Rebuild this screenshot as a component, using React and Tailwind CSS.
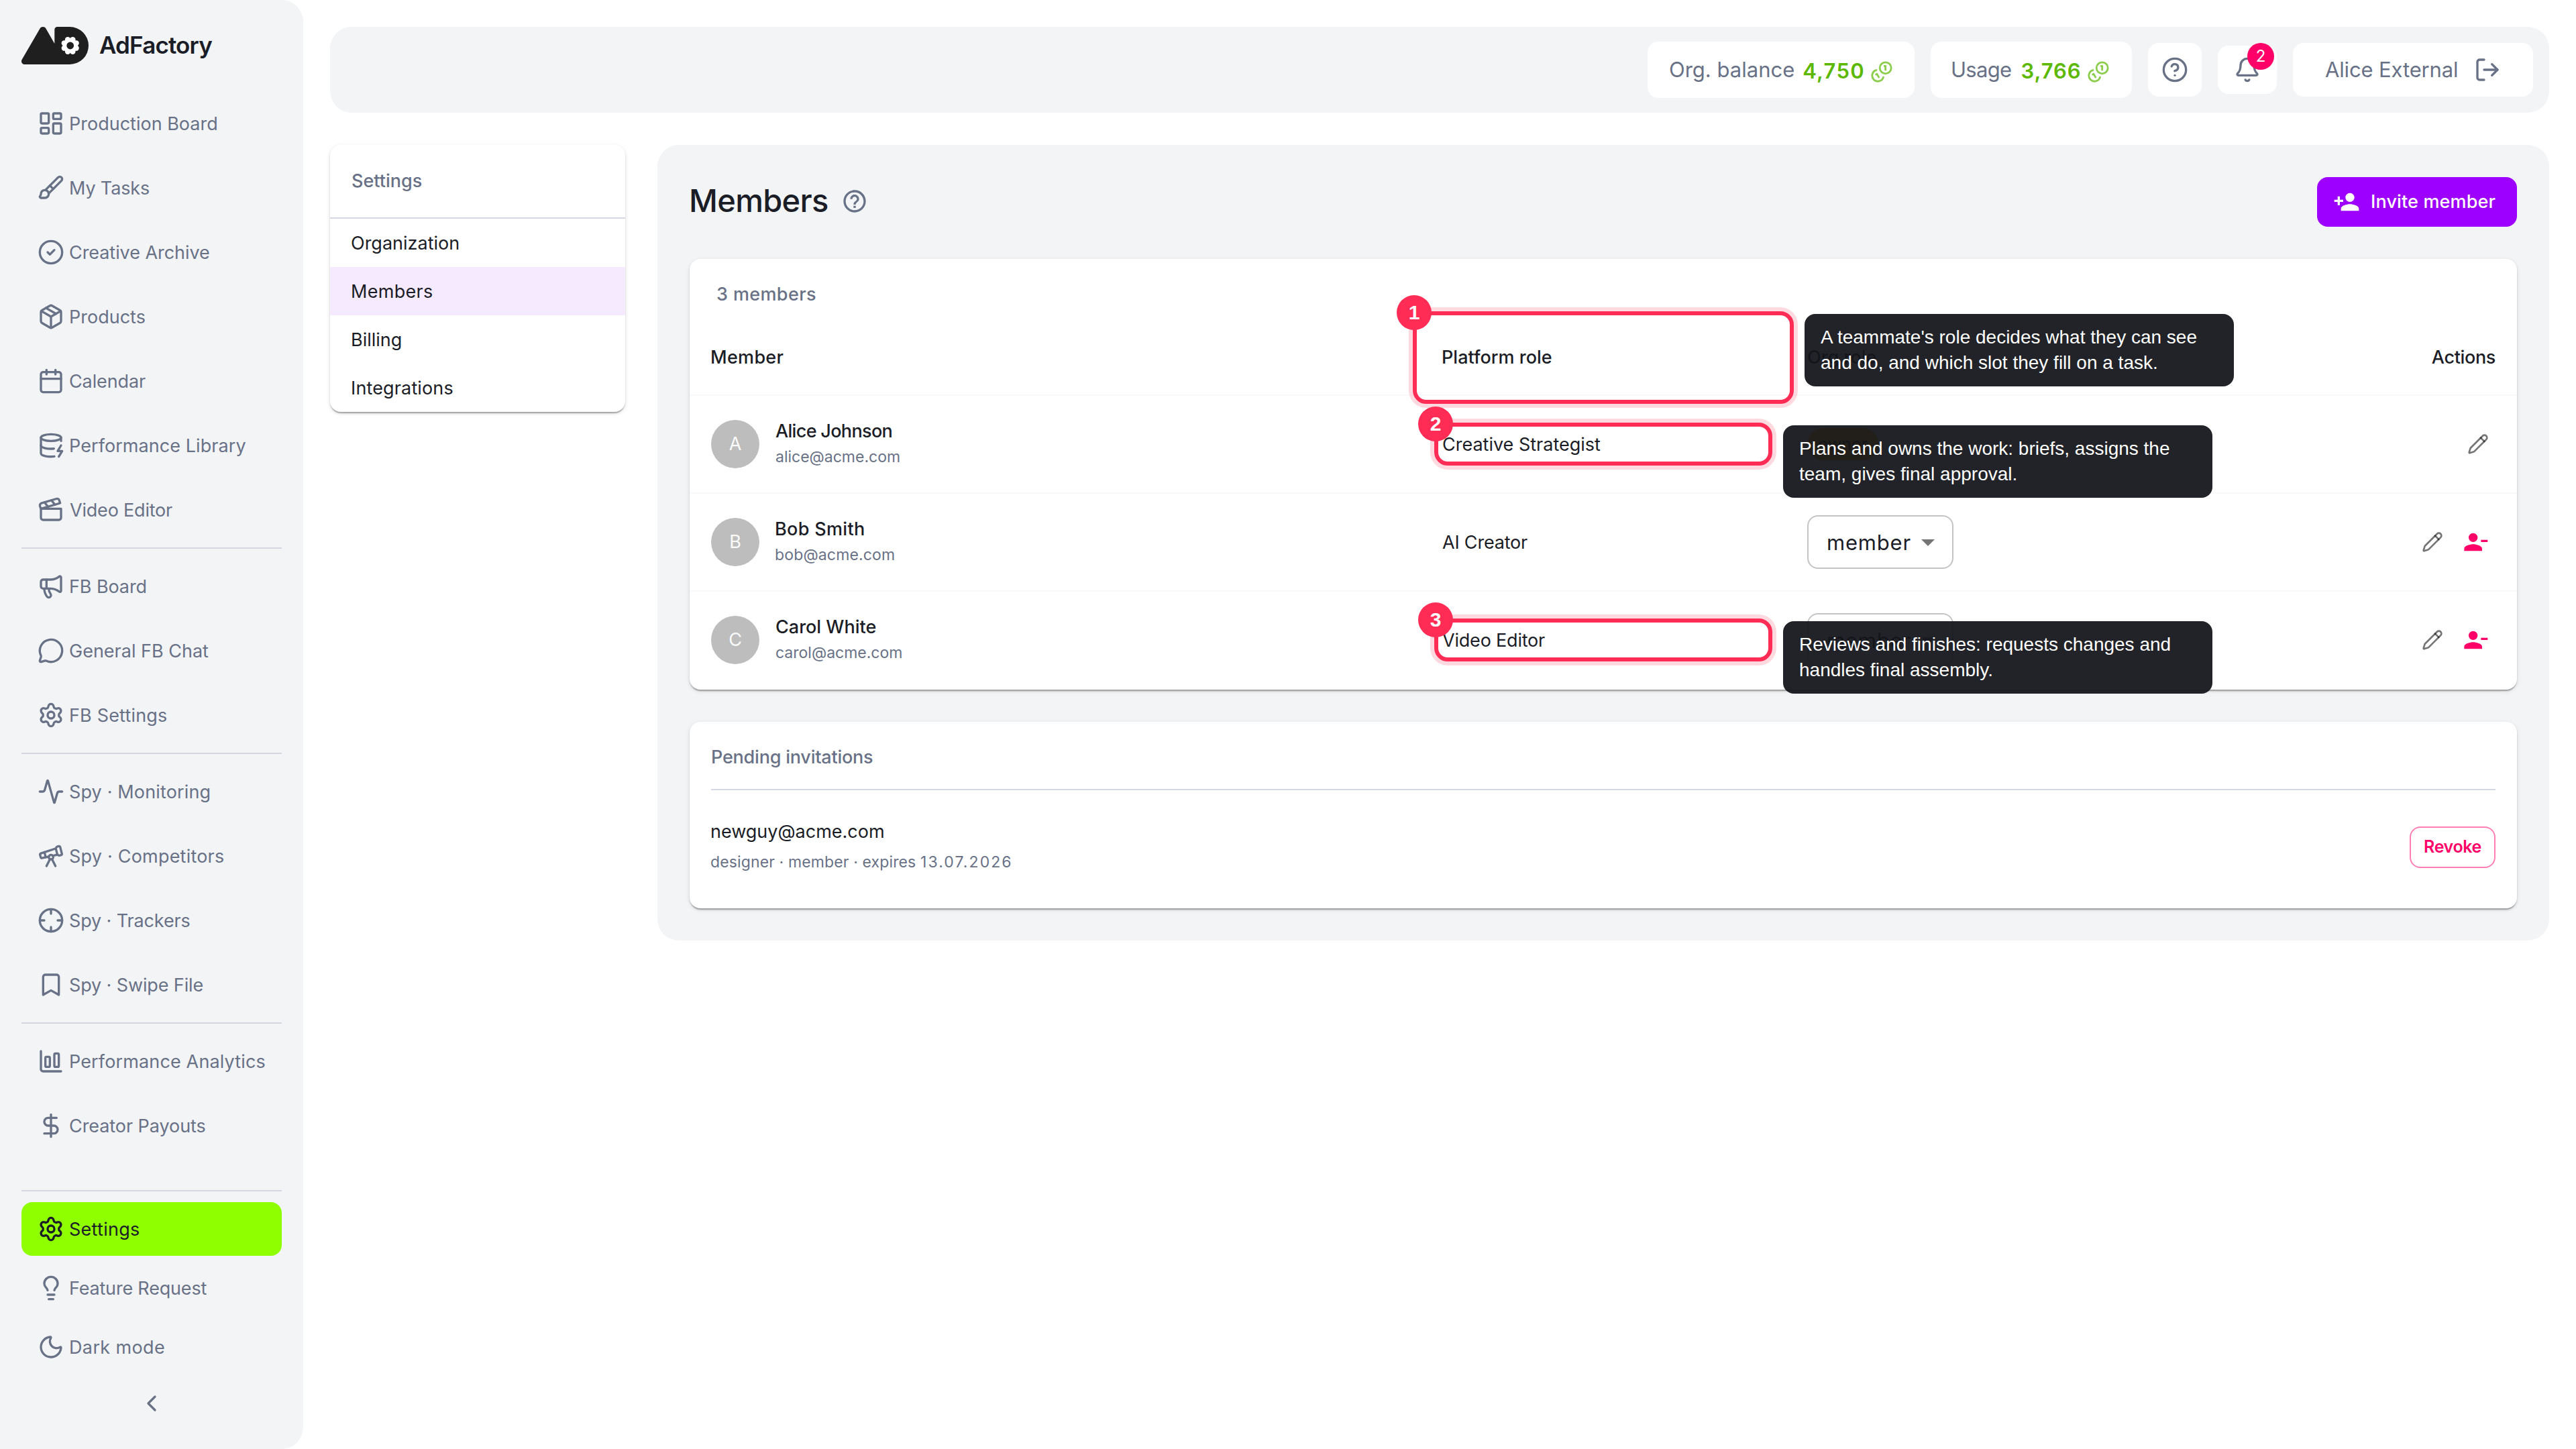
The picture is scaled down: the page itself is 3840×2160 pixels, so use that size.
import React from "react";
import {
  LayoutDashboard, Brush, CircleCheck, Package, Calendar, DatabaseZap, Clapperboard,
  Megaphone, MessageCircle, Settings, Activity, Telescope, Crosshair, Bookmark,
  ChartColumnBig, DollarSign, Lightbulb, Moon, ChevronLeft, CircleQuestionMark,
  Bell, LogOut, Pencil,
} from "lucide-react";
import { MdHelpOutline, MdPersonAdd, MdPersonRemove, MdArrowDropDown } from "react-icons/md";

const navGroups = [
  [
    { label: "Production Board", Icon: LayoutDashboard },
    { label: "My Tasks", Icon: Brush, cls: "tracking-[-0.14px]" },
    { label: "Creative Archive", Icon: CircleCheck, cls: "tracking-[-0.06px]" },
    { label: "Products", Icon: Package },
    { label: "Calendar", Icon: Calendar, cls: "tracking-[-0.11px]" },
    { label: "Performance Library", Icon: DatabaseZap, cls: "tracking-[0.07px]" },
    { label: "Video Editor", Icon: Clapperboard, cls: "pl-px tracking-[-0.2px]" },
  ],
  [
    { label: "FB Board", Icon: Megaphone, cls: "tracking-[-0.1px]" },
    { label: "General FB Chat", Icon: MessageCircle },
    { label: "FB Settings", Icon: Settings, cls: "tracking-[0.17px]" },
  ],
  [
    { label: "Spy · Monitoring", Icon: Activity, cls: "tracking-[0.14px]" },
    { label: "Spy · Competitors", Icon: Telescope, cls: "tracking-[0.21px]" },
    { label: "Spy · Trackers", Icon: Crosshair, cls: "tracking-[-0.13px]" },
    { label: "Spy · Swipe File", Icon: Bookmark, cls: "tracking-[-0.12px]" },
  ],
  [
    { label: "Performance Analytics", Icon: ChartColumnBig, cls: "tracking-[0.14px]" },
    { label: "Creator Payouts", Icon: DollarSign, cls: "tracking-[-0.07px]" },
  ],
];

const footerNav = [
  { label: "Settings", Icon: Settings, cls: "tracking-[0.27px]", active: true },
  { label: "Feature Request", Icon: Lightbulb, cls: "tracking-[-0.19px]" },
  { label: "Dark mode", Icon: Moon, cls: "tracking-[0.37px]" },
];

const settingsMenu = [
  { label: "Organization" },
  { label: "Members", cls: "tracking-[0.3px]", active: true },
  { label: "Billing" },
  { label: "Integrations", cls: "tracking-[0.14px]" },
];

const members = [
  { name: "Alice Johnson", nameCls: "tracking-[-0.67px]", email: "alice@acme.com", role: "Creative Strategist", owner: true },
  { name: "Bob Smith", nameCls: "-ml-px tracking-[0.33px]", email: "bob@acme.com", emailCls: "-ml-px tracking-[0.15px]", role: "AI Creator", roleCls: "tracking-[-0.2px]" },
  { name: "Carol White", email: "carol@acme.com", role: "Video Editor", roleCls: "tracking-[-0.2px]" },
];

const callouts = [
  {
    n: 1,
    ring: "left-[2106px] top-[464px] w-[568px] h-[138px]",
    badge: "left-[2082px] top-[440px]",
    tip: "left-[2690px] top-[468px]",
    lines: ["A teammate's role decides what they can see", "and do, and which slot they fill on a task."],
  },
  {
    n: 2,
    ring: "left-[2138px] top-[630px] w-[504px] h-[64px]",
    badge: "left-[2114px] top-[606px]",
    tip: "left-[2658px] top-[634px]",
    lines: ["Plans and owns the work: briefs, assigns the", "team, gives final approval."],
  },
  {
    n: 3,
    ring: "left-[2138px] top-[922px] w-[504px] h-[64px]",
    badge: "left-[2114px] top-[898px]",
    tip: "left-[2658px] top-[926px]",
    lines: ["Reviews and finishes: requests changes and", "handles final assembly."],
  },
];

const LOBES = [0, 1, 2, 3, 4, 5, 6, 7].map((i) => {
  const a = ((22.5 + i * 45) * Math.PI) / 180;
  return [72.7 + 9.6 * Math.cos(a), 28 + 9.6 * Math.sin(a)];
});

function Logo() {
  return (
    <svg width="100" height="56" viewBox="0 0 100 56" className="shrink-0">
      <path
        fill="#1f1f1f"
        d="M27.6 2.4C29.6-.8 34.4-.8 36.4 2.4L49.3 25V4.2C49.3 1.8 51.1 0 53.5 0H72a28 28 0 0 1 0 56H4.6C.9 56-1.2 52 .7 48.8Z"
      />
      <g fill="#fff">
        <circle cx="72.7" cy="28" r="10.6" />
        {LOBES.map(([x, y], i) => (
          <circle key={i} cx={x} cy={y} r="4.2" />
        ))}
      </g>
      <circle cx="72.7" cy="28" r="5.4" fill="#1f1f1f" />
    </svg>
  );
}

function CoinPair({ className }) {
  return (
    <svg
      width="34"
      height="34"
      viewBox="0 0 24 24"
      fill="none"
      stroke="currentColor"
      strokeWidth="2"
      strokeLinecap="round"
      strokeLinejoin="round"
      className={className}
    >
      <path d="M13.744 17.736a6 6 0 1 1-7.48-7.48" />
      <path d="M15 6h1v4" />
      <path d="m6.134 14.768.866-.5 2 3.464" />
      <circle cx="16" cy="8" r="6" />
    </svg>
  );
}

function NavItem({ label, Icon, cls = "", active }) {
  return (
    <div
      className={`flex h-20 items-center gap-[7px] rounded-2xl px-6 text-[27px] leading-10 ${
        active ? "bg-[#8fff00] text-[#1b1d26]" : "text-[#687186]"
      }`}
    >
      <Icon size={40} strokeWidth={2} className="shrink-0" />
      <span className={`mt-0.5 whitespace-nowrap ${cls}`}>{label}</span>
    </div>
  );
}

function Sidebar() {
  return (
    <aside className="flex h-[2160px] w-[452px] shrink-0 flex-col rounded-r-[32px] bg-[#f3f4f6] px-8">
      <div className="flex h-36 items-start pt-10">
        <Logo />
        <span className="ml-4 mt-[7px] text-[35px] font-semibold leading-[40px] tracking-[-0.85px] text-[#1b1d26]">AdFactory</span>
      </div>
      <nav className="flex flex-col gap-4">
        {navGroups.map((group, g) => (
          <React.Fragment key={g}>
            {g > 0 && <div className="h-0.5 bg-[#d5d7e0]" />}
            {group.map((item) => (
              <NavItem key={item.label} {...item} />
            ))}
          </React.Fragment>
        ))}
      </nav>
      <div className="mt-auto flex flex-col pb-12">
        <div className="mb-4 h-0.5 bg-[#d5d7e0]" />
        <div className="flex flex-col gap-2">
          {footerNav.map((item) => (
            <NavItem key={item.label} {...item} />
          ))}
        </div>
        <div className="mt-6 flex h-10 justify-center text-[#687186]">
          <ChevronLeft size={40} />
        </div>
      </div>
    </aside>
  );
}

function Balance({ label, value, labelCls, valueCls, box }) {
  return (
    <div className={`flex h-[84px] items-center rounded-2xl bg-white text-[31px] leading-[44px] ${box}`}>
      <span className={`text-[#687186] ${labelCls}`}>{label}</span>
      <span className={`mt-1 font-semibold text-[#5cb800] ${valueCls}`}>{value}</span>
      <CoinPair className="ml-2 mt-[5px] text-[#5cb800] opacity-70" />
    </div>
  );
}

function Header() {
  return (
    <header className="flex h-32 items-center justify-end gap-6 rounded-[32px] bg-[#f3f4f6] pr-6 text-[#687186]">
      <Balance label="Org. balance" value="4,750" box="w-[398px] pl-8" labelCls="" valueCls="ml-3 tracking-[1.28px]" />
      <Balance label="Usage" value="3,766" box="w-[300px] pl-[30px]" labelCls="tracking-[-0.71px]" valueCls="ml-[14px] tracking-[1px]" />
      <div className="flex size-20 items-center justify-center rounded-2xl bg-white">
        <CircleQuestionMark size={40} />
      </div>
      <div className="relative flex h-[72px] w-[88px] items-center justify-center rounded-2xl bg-white">
        <Bell size={40} />
        <span className="absolute right-1 -top-1 flex size-10 items-center justify-center rounded-full bg-[#ff0068] text-2xl leading-none text-white">
          2
        </span>
      </div>
      <div className="flex h-20 w-[358px] items-center justify-between rounded-2xl bg-white px-12 text-[31px] leading-[44px]">
        <span className="tracking-[-0.14px]">Alice External</span>
        <LogOut size={40} />
      </div>
    </header>
  );
}

const cardShadow =
  "shadow-[0_4px_2px_-2px_rgba(0,0,0,0.2),0_2px_2px_0_rgba(0,0,0,0.14),0_2px_6px_0_rgba(0,0,0,0.12)]";

function SettingsPanel() {
  return (
    <div className={`w-[440px] shrink-0 overflow-hidden rounded-2xl bg-white text-[27px] leading-10 ${cardShadow}`}>
      <div className="flex h-[110px] items-center border-b-2 border-[#d5d7e2] px-8 pb-px font-medium text-[#687186]">
        Settings
      </div>
      {settingsMenu.map(({ label, cls = "", active }) => (
        <div
          key={label}
          className={`flex h-[72px] items-center px-[31px] pt-0.5 text-[#1b1d26] ${active ? "bg-[#f5eaff]" : ""}`}
        >
          <span className={cls}>{label}</span>
        </div>
      ))}
    </div>
  );
}

const tableCols = "grid grid-cols-[1090px_544px_1fr_auto] items-center";

function MemberRow({ m, last }) {
  return (
    <div className={`${tableCols} h-[146px] text-[27px] leading-10 text-[#1b1d26] ${last ? "pb-0.5" : "border-b-2 border-[#f9f9fa]"}`}>
      <div className="flex items-center gap-6 px-8">
        <div className="flex size-[72px] items-center justify-center rounded-full bg-[#bdbdbd] text-[27px] text-[#fafafa]">
          {m.name[0]}
        </div>
        <div className="flex flex-col pb-0.5">
          <span className={`font-medium ${m.nameCls || ""}`}>{m.name}</span>
          <span className={`text-[23px] leading-9 text-[#687186] ${m.emailCls || ""}`}>{m.email}</span>
        </div>
      </div>
      <div className={`px-8 pt-0.5 ${m.roleCls || ""}`}>{m.role}</div>
      <div className="px-8">
        {m.owner ? (
          <span className="flex h-12 w-[106px] items-center justify-center rounded-full bg-[#ffae00] text-[25px] leading-none">
            owner
          </span>
        ) : (
          <div className="flex h-20 w-[218px] items-center justify-between rounded-2xl border-2 border-[#c4c4c4] pl-[27px] pr-3 text-[31px]">
            <span className="mt-0.5 tracking-[0.81px]">member</span>
            <MdArrowDropDown size={48} className="text-[#757575]" />
          </div>
        )}
      </div>
      <div className="flex items-center gap-2 pr-8">
        <span className="p-[10px]">
          <Pencil size={32} className="stroke-black/54" />
        </span>
        {!m.owner && (
          <span className="p-[10px]">
            <MdPersonRemove size={40} className="text-[#ff0068]" />
          </span>
        )}
      </div>
    </div>
  );
}

function MembersPanel() {
  return (
    <main className="flex h-[1186px] flex-1 flex-col rounded-[32px] bg-[#f3f4f6] px-12 pt-12">
      <div className="flex h-[74px] items-center">
        <h1 className="-mt-1 ml-[-1px] text-[47px] font-medium leading-[56px] tracking-[-0.68px] text-[#1b1d26]">Members</h1>
        <MdHelpOutline size={40} className="-mt-0.5 ml-[19px] text-[#687186]" />
        <button className="ml-auto flex h-[74px] w-[298px] items-center rounded-2xl bg-[#9d00ff] pl-6 text-[27px] font-medium leading-10 tracking-[0.14px] text-white">
          <MdPersonAdd size={40} className="mr-4" />
          Invite member
        </button>
      </div>

      <section className={`mt-12 h-[642px] rounded-2xl bg-white ${cardShadow}`}>
        <div className="flex h-[90px] items-end pb-[17px] pl-10 text-[27px] font-medium leading-10 tracking-[0.38px] text-[#687186]">
          3 members
        </div>
        <div className={`${tableCols} h-[114px] border-b-2 border-[#f9f9fa] pt-0.5 text-[27px] font-medium leading-10 text-[#1b1d26]`}>
          <div className="px-[31px] tracking-[0.3px]">Member</div>
          <div className="px-[31px]">Platform role</div>
          <div className="px-8">Org role</div>
          <div className="px-8 tracking-[-0.35px]">Actions</div>
        </div>
        {members.map((m, i) => (
          <MemberRow key={m.name} m={m} last={i === members.length - 1} />
        ))}
      </section>

      <section className={`mt-12 h-[278px] rounded-2xl bg-white px-8 ${cardShadow}`}>
        <div className="flex h-[102px] items-center border-b-2 border-[#d5d7e2] pt-[5px] text-[27px] font-medium leading-10 tracking-[-0.22px] text-[#687186]">
          Pending invitations
        </div>
        <div className="mt-10 flex h-[90px] items-center justify-between">
          <div className="-ml-px flex flex-col gap-[7px] pb-[5px] pt-px">
            <span className="text-[27px] leading-10 text-[#1b1d26]">newguy@acme.com</span>
            <span className="whitespace-pre text-[23px] leading-9 tracking-[0.13px] text-[#687186]">
              {"designer · member · expires "}
              <span className="tracking-[2.1px]">13.07.2026</span>
            </span>
          </div>
          <button className="flex h-[62px] w-32 items-center justify-center rounded-2xl border-2 border-[#ff80b4] pb-[3px] text-[25px] font-semibold leading-9 tracking-[-0.38px] text-[#ff0068]">
            Revoke
          </button>
        </div>
      </section>
    </main>
  );
}

function Callout({ n, ring, badge, tip, lines }) {
  return (
    <>
      <div className={`absolute rounded-[20px] border-[6px] border-[#ff2d55] shadow-[0_0_0_6px_rgba(255,45,85,0.18)] ${ring}`} />
      <div
        className={`absolute flex size-[52px] items-center justify-center rounded-full bg-[#ff2d55] font-['Liberation_Sans',sans-serif] text-[30px] font-bold leading-none text-white ${badge}`}
      >
        {n}
      </div>
      <div
        className={`absolute h-[108px] w-[640px] whitespace-nowrap rounded-2xl bg-[rgba(20,21,27,0.94)] px-6 py-4 font-['Liberation_Sans',sans-serif] text-[28px] leading-[37.8px] text-white ${tip}`}
      >
        {lines.map((l) => (
          <div key={l}>{l}</div>
        ))}
      </div>
    </>
  );
}

export default function App() {
  return (
    <div className="relative flex h-[2160px] w-[3840px] overflow-hidden bg-white font-['Inter',sans-serif]">
      <Sidebar />
      <div className="flex flex-1 flex-col gap-12 pl-10 pr-10 pt-10">
        <Header />
        <div className="flex items-start gap-12">
          <SettingsPanel />
          <MembersPanel />
        </div>
      </div>
      {callouts.map((c) => (
        <Callout key={c.n} {...c} />
      ))}
    </div>
  );
}
